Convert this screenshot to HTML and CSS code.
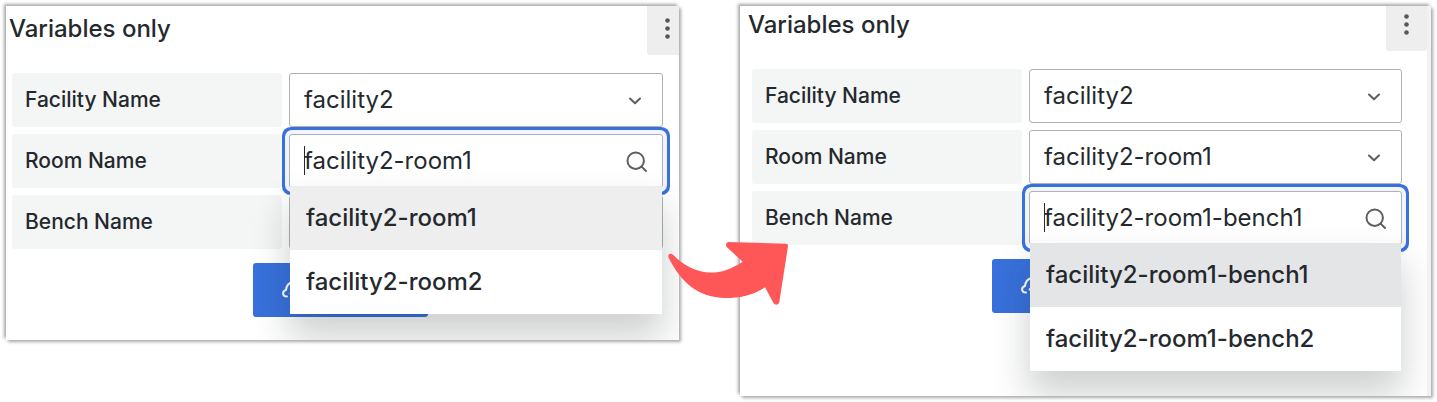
FILE: index.html
```html
<!DOCTYPE html>
<html lang="en">
<head>
<meta charset="utf-8">
<title>Variables only</title>
<link rel="stylesheet" href="styles.css">
</head>
<body>
<main class="page">
  <section class="panel panel-room">
    <header class="panel-header">
      <h2 class="panel-title">Variables only</h2>
      <button class="menu-button" type="button" aria-label="Panel menu">
        <svg class="menu-icon" viewBox="0 0 9 23"><circle cx="4.5" cy="3.5" r="2.3"/><circle cx="4.5" cy="11.5" r="2.3"/><circle cx="4.5" cy="19.5" r="2.3"/></svg>
      </button>
    </header>
    <form class="form">
      <div class="row">
        <label class="label" for="facility-a">Facility Name</label>
        <div class="field">
          <select class="control" id="facility-a"><option>facility2</option></select>
          <svg class="chevron" viewBox="0 0 14 10"><path d="M2 2.5 7 7.2 12 2.5"/></svg>
        </div>
      </div>
      <div class="row">
        <label class="label" for="room-a">Room Name</label>
        <div class="field">
          <input class="control control-focused" id="room-a" type="text" value="facility2-room1" autocomplete="off">
          <span class="caret"></span>
          <svg class="search" viewBox="0 0 22 22"><circle cx="9.7" cy="9.7" r="8.2"/><path d="M15.6 15.6 20 20"/></svg>
          <ul class="options">
            <li class="option option-active">facility2-room1</li>
            <li class="option">facility2-room2</li>
          </ul>
        </div>
      </div>
      <div class="row">
        <label class="label" for="bench-a">Bench Name</label>
        <div class="field">
          <select class="control" id="bench-a"></select>
        </div>
      </div>
      <div class="actions">
        <button class="submit" type="button" aria-label="Submit">
          <svg class="cloud" viewBox="0 0 28 24"><path d="M6 18.500C1.500 18.500 .5 13.500 5 12 6 3 16 1 19 8c7 0 8 8 3.500 10.500M14 22V12M9.500 15.500 14 12l4.500 3.500"/></svg>
        </button>
      </div>
    </form>
  </section>

  <div class="between">
    <svg class="arrow" viewBox="0 0 480 300"><path d="M56 113C52 104 60 98 69 104C125 160 196 180 278 125L230 81Q224 69 235 66L408 71Q415 71 414 79L388 246Q386 254 379 254Q374 254 370 248L345 202C305 227 270 234 226 234C145 231 95 190 56 113Z"/></svg>
  </div>

  <section class="panel panel-bench">
    <header class="panel-header">
      <h2 class="panel-title">Variables only</h2>
      <button class="menu-button" type="button" aria-label="Panel menu">
        <svg class="menu-icon" viewBox="0 0 9 23"><circle cx="4.5" cy="3.5" r="2.3"/><circle cx="4.5" cy="11.5" r="2.3"/><circle cx="4.5" cy="19.5" r="2.3"/></svg>
      </button>
    </header>
    <form class="form">
      <div class="row">
        <label class="label" for="facility-b">Facility Name</label>
        <div class="field">
          <select class="control" id="facility-b"><option>facility2</option></select>
          <svg class="chevron" viewBox="0 0 14 10"><path d="M2 2.5 7 7.2 12 2.5"/></svg>
        </div>
      </div>
      <div class="row">
        <label class="label" for="room-b">Room Name</label>
        <div class="field">
          <select class="control" id="room-b"><option>facility2-room1</option></select>
          <svg class="chevron" viewBox="0 0 14 10"><path d="M2 2.5 7 7.2 12 2.5"/></svg>
        </div>
      </div>
      <div class="row">
        <label class="label" for="bench-b">Bench Name</label>
        <div class="field">
          <input class="control control-focused" id="bench-b" type="text" value="facility2-room1-bench1" autocomplete="off">
          <span class="caret"></span>
          <svg class="search" viewBox="0 0 22 22"><circle cx="9.7" cy="9.7" r="8.2"/><path d="M15.6 15.6 20 20"/></svg>
          <ul class="options">
            <li class="option option-active">facility2-room1-bench1</li>
            <li class="option">facility2-room1-bench2</li>
          </ul>
        </div>
      </div>
      <div class="actions">
        <button class="submit" type="button" aria-label="Submit">
          <svg class="cloud" viewBox="0 0 28 24"><path d="M6 18.500C1.500 18.500 .5 13.500 5 12 6 3 16 1 19 8c7 0 8 8 3.500 10.500M14 22V12M9.500 15.500 14 12l4.500 3.500"/></svg>
        </button>
      </div>
    </form>
  </section>
</main>
</body>
</html>
```
FILE: styles.css
```css
* {
  box-sizing: border-box;
}

body {
  margin: 0;
  background: #fff;
  color: #24292e;
  font-family: Inter, "Liberation Sans", sans-serif;
  font-size: 24px;
}

.page {
  display: flex;
  align-items: flex-start;
  padding: 6px;
}

.panel {
  --shift: 0px;
  --active: #e4e5e7;
  min-width: 0;
  overflow: hidden;
  background: #fff;
  box-shadow: 2px 2px 3px #aaa, -2px -2px 3px #aaa;
}

.panel-room {
  --shift: 4px;
  --active: #eee;
  flex: 673 1 0;
  padding-bottom: 23px;
}

.panel-bench {
  flex: 687 1 0;
  padding-bottom: 83px;
  border-right: 4px solid #f1f2f2;
}

.panel-header {
  display: flex;
  justify-content: space-between;
  align-items: flex-start;
  height: calc(63px + var(--shift));
  padding-left: 3px;
}

.panel-bench .panel-header {
  padding-left: 8px;
}

.panel-title {
  margin: 0;
  padding-top: var(--shift);
  font-size: 24px;
  font-weight: 500;
  line-height: 37px;
}

.menu-button {
  display: flex;
  justify-content: center;
  align-items: flex-start;
  width: 41px;
  height: calc(45px + var(--shift));
  padding: calc(7px + var(--shift)) 0 0;
  border: 0;
  border-radius: 0 0 3px 3px;
  background: #eee;
}

.panel-room .menu-button {
  margin-right: -9px;
}

.menu-icon {
  width: 9px;
  height: 23px;
  fill: #55595d;
}

.form {
  display: flex;
  flex-direction: column;
  gap: 7px;
  padding: 0 16px 0 6px;
}

.panel-bench .form {
  padding: 0 25px 0 12px;
}

.row {
  display: grid;
  grid-template-columns: 270px 1fr;
  gap: 7px;
}

.label {
  padding-left: 13px;
  border-radius: 3px;
  background: #f4f5f5;
  font-size: 21px;
  font-weight: 500;
  line-height: 54px;
}

.field {
  position: relative;
  min-width: 0;
}

.control {
  display: block;
  width: 100%;
  height: 54px;
  margin: 0;
  padding: 0 48px 2px 14px;
  border: 1px solid #b0b1b2;
  border-radius: 3px;
  outline: 0;
  background: #fff;
  color: inherit;
  font: inherit;
  appearance: none;
}

.control-focused {
  box-shadow: 0 0 0 4px #f1f4fa, 0 0 0 7px #3871dc;
}

.caret {
  position: absolute;
  top: 12px;
  left: 15px;
  width: 1px;
  height: 29px;
  background: #24292e;
}

.chevron,
.search {
  position: absolute;
  fill: none;
  stroke: #5b5e62;
  stroke-width: 2;
  stroke-linecap: round;
  stroke-linejoin: round;
  pointer-events: none;
}

.chevron {
  top: 23px;
  right: 21px;
  width: 14px;
  height: 10px;
}

.search {
  top: 17px;
  right: 15px;
  width: 22px;
  height: 22px;
}

.options {
  position: absolute;
  z-index: 2;
  top: 52px;
  right: 1px;
  left: 1px;
  margin: 0;
  padding: 0;
  background: #fff;
  box-shadow: 0 22px 34px 2px rgba(20, 30, 28, 0.2);
  list-style: none;
}

.option {
  padding-left: 16px;
  font-weight: 500;
  line-height: 64px;
}

.option-active {
  background: var(--active);
}

.actions {
  display: flex;
  justify-content: center;
  padding: 7px 0 0 5px;
}

.submit {
  width: 175px;
  height: 54px;
  padding: 0 0 0 28px;
  border: 0;
  border-radius: 3px;
  background: #3871dc;
  text-align: left;
}

.cloud {
  display: block;
  width: 28px;
  height: 24px;
  fill: none;
  stroke: #fff;
  stroke-width: 2;
  stroke-linecap: round;
  stroke-linejoin: round;
}

.between {
  position: relative;
  z-index: 3;
  flex: 0 0 61px;
}

.arrow {
  position: absolute;
  top: 214px;
  left: -29px;
  width: 160px;
  height: 100px;
  fill: #ff5757;
}
```
